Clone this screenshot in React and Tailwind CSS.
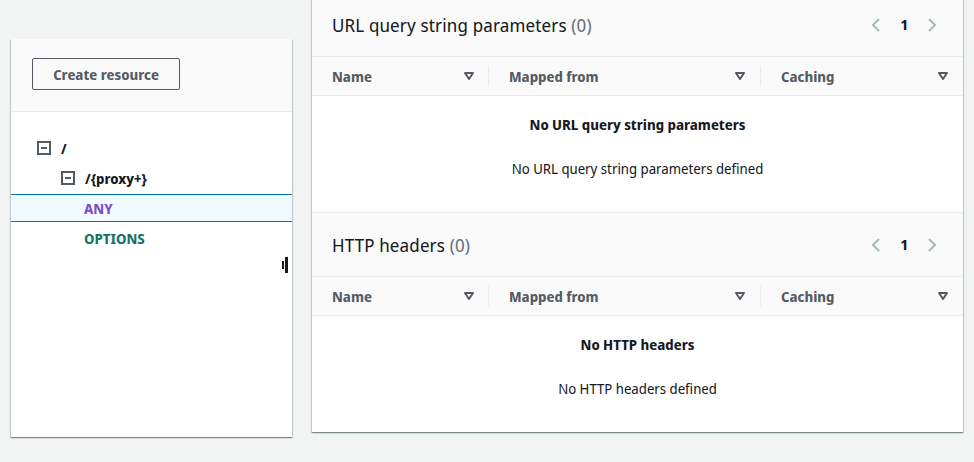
import React from 'react';

const SHADOW =
  'shadow-[0_1px_1px_0_rgba(0,28,36,0.3),1px_1px_1px_0_rgba(0,28,36,0.15),-1px_1px_1px_0_rgba(0,28,36,0.15)]';

function CollapseIcon() {
  return (
    <svg width="14" height="14" viewBox="0 0 14 14" className="shrink-0">
      <rect x="1" y="1" width="12" height="12" fill="none" stroke="#545b64" strokeWidth="2" />
      <line x1="4" y1="7" x2="10" y2="7" stroke="#545b64" strokeWidth="2" />
    </svg>
  );
}

function SortIcon() {
  return (
    <svg width="10" height="8" viewBox="0 0 10 8" className="shrink-0">
      <polygon points="1,1 9,1 5,7" fill="none" stroke="#545b64" strokeWidth="2" strokeLinejoin="round" />
    </svg>
  );
}

function Chevron({ dir }) {
  return (
    <svg width="10" height="14" viewBox="0 0 10 14">
      <polyline
        points={dir === 'left' ? '8,1 2,7 8,13' : '2,1 8,7 2,13'}
        fill="none"
        stroke="#aab7b8"
        strokeWidth="2"
      />
    </svg>
  );
}

function Section({ title, emptyTitle, emptyText, last }) {
  return (
    <div className={last ? '' : 'border-b border-[#eaeded]'}>
      {/* header with pagination */}
      <div className="h-[64px] bg-[#fafafa] border-b border-[#eaeded] flex items-center justify-between pl-5 pr-[26px]">
        <h2 className="text-[18px] leading-6 tracking-[0.15px] text-[#16191f]">
          {title} <span className="text-[#687078]">(0)</span>
        </h2>
        <div className="flex items-center gap-[19px]">
          <Chevron dir="left" />
          <span className="text-[14px] font-bold text-[#16191f]">1</span>
          <Chevron dir="right" />
        </div>
      </div>

      {/* column headings */}
      <div className="h-[39px] bg-[#fafafa] border-b border-[#eaeded] grid grid-cols-[176px_272px_1fr] items-center text-[14px] font-bold text-[#545b64]">
        <div className="flex items-center justify-between pl-5 pr-[14px]">
          <span>Name</span>
          <SortIcon />
        </div>
        <div className="h-[20px] border-l border-[#eaeded] flex items-center justify-between pl-5 pr-[15px]">
          <span>Mapped from</span>
          <SortIcon />
        </div>
        <div className="h-[20px] border-l border-[#eaeded] flex items-center justify-between pl-5 pr-[15px]">
          <span>Caching</span>
          <SortIcon />
        </div>
      </div>

      {/* empty state */}
      <div className="h-[116px] flex flex-col items-center pt-[19px] text-[14px] leading-5 text-[#16191f]">
        <p className="font-bold">{emptyTitle}</p>
        <p className="mt-[24px]">{emptyText}</p>
      </div>
    </div>
  );
}

export default function App() {
  return (
    <div className="font-['Noto_Sans_Display',sans-serif] bg-[#f2f3f3] h-[462px] overflow-hidden flex items-start gap-5 px-[11px]">
      {/* resource tree */}
      <div className={`relative w-[281px] h-[398px] mt-[39px] bg-white ${SHADOW}`}>
        <div className="h-[73px] bg-[#fafafa] border-b border-[#eaeded] pt-[19px] pl-[21px]">
          <button className="w-[148px] h-[32px] border border-[#545b64] rounded-[2px] text-[14px] font-bold text-[#545b64]">
            Create resource
          </button>
        </div>

        <div className="pt-[21px] text-[14px] font-bold">
          <div className="h-[30px] flex items-center gap-[10px] pl-[26px] text-[#16191f]">
            <CollapseIcon />
            <span>/</span>
          </div>
          <div className="h-[30px] flex items-center gap-[10px] pl-[50px] text-[#16191f]">
            <CollapseIcon />
            <span>/{'{proxy+}'}</span>
          </div>
          <div className="h-[28px] my-[1px] flex items-center pl-[73px] bg-[#f1faff] border-y border-[#0073bb] text-[#7b4dcc]">
            ANY
          </div>
          <div className="h-[30px] flex items-center pl-[73px] text-[#147364]">OPTIONS</div>
        </div>

        {/* resize handle */}
        <div className="absolute left-[271px] top-[218px] flex items-center gap-[1px]">
          <div className="w-[2px] h-[8px] bg-[#16191f]" />
          <div className="w-[3px] h-[16px] bg-[#16191f]" />
        </div>
      </div>

      {/* request parameters */}
      <div className={`w-[651px] -mt-[7px] bg-white ${SHADOW}`}>
        <Section
          title="URL query string parameters"
          emptyTitle="No URL query string parameters"
          emptyText="No URL query string parameters defined"
        />
        <Section title="HTTP headers" emptyTitle="No HTTP headers" emptyText="No HTTP headers defined" last />
      </div>
    </div>
  );
}
